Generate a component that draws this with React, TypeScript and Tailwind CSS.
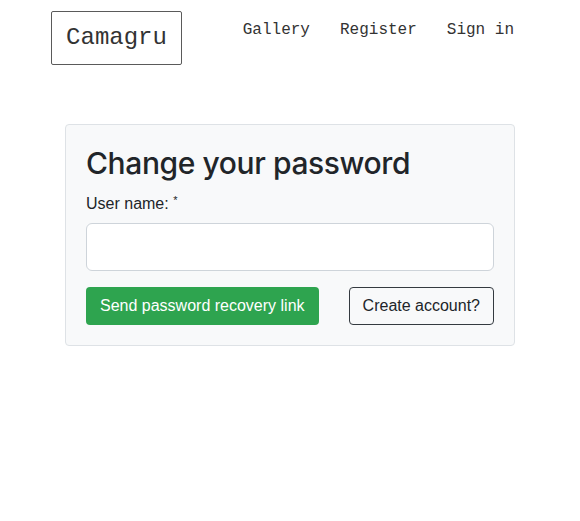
import React from 'react';

const navLinks = ['Gallery', 'Register', 'Sign in'];

const App: React.FC = () => {
  return (
    <div className="min-h-[521px] bg-white text-[#212529] font-['Liberation_Sans',Arial,sans-serif]">
      {/* Header */}
      <header className="mx-auto flex w-[478px] items-start justify-between pt-[11px]">
        <a className="flex h-[54px] w-[131px] items-center justify-center rounded-[2px] border-[1.5px] border-[#5a5a5a] font-['Liberation_Mono','Courier_New',monospace] text-2xl text-[#333]">
          Camagru
        </a>
        <nav className="flex pt-[7px] font-['Liberation_Mono','Courier_New',monospace] text-base leading-6 text-[#333]">
          {navLinks.map(link => (
            <a key={link} className="px-[15px]">
              {link}
            </a>
          ))}
        </nav>
      </header>

      {/* Card */}
      <div className="mx-auto mt-[59px] w-[450px] rounded border border-[#dee2e6] bg-[#f8f9fa] px-5 pb-5 pt-[19px]">
        <h2 className="mb-[10px] font-['Inter',sans-serif] text-[30px] font-medium leading-[38px] tracking-[-0.4px]">
          Change your password
        </h2>
        <label className="block text-base leading-6">
          User name: <sup className="text-[11px]">*</sup>
        </label>
        <input
          type="text"
          className="mt-[7px] block h-12 w-full rounded-md border border-[#ced4da] bg-white px-4 outline-none"
        />
        <div className="mt-4 flex items-center justify-between">
          <button className="h-[38px] rounded bg-[#2ea44f] px-[14px] text-base text-white">
            Send password recovery link
          </button>
          <button className="h-[38px] rounded border border-[#343a40] px-[13px] text-base text-[#212529]">
            Create account?
          </button>
        </div>
      </div>
    </div>
  );
};

export default App;
